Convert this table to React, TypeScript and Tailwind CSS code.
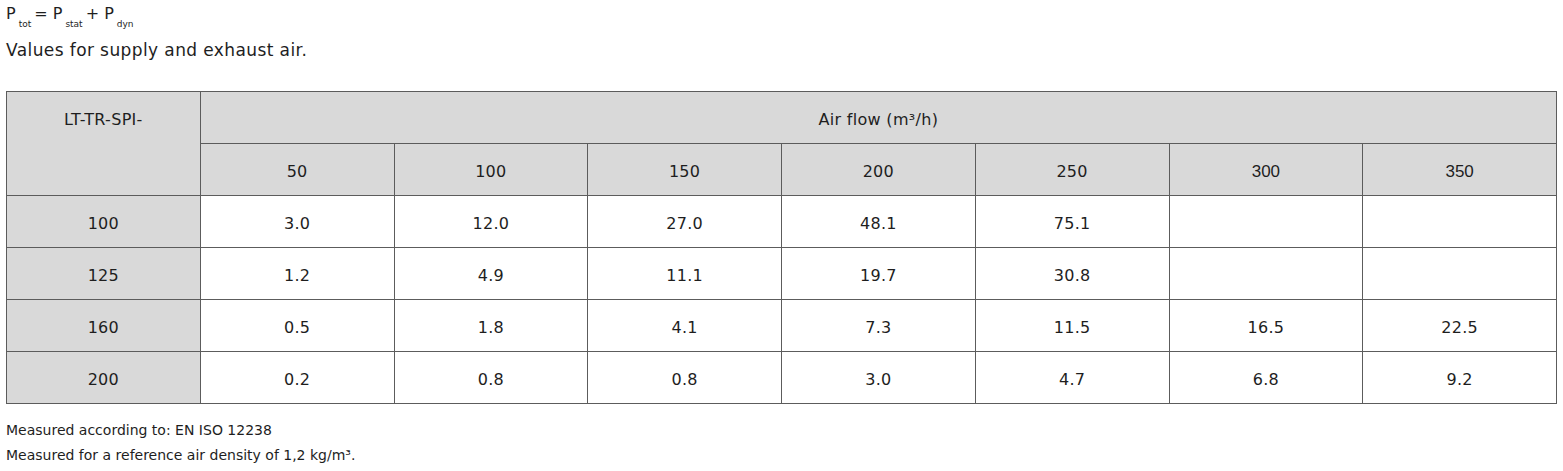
import React from "react";

const headers = ["50", "100", "150", "200", "250", "300", "350"];
const rows: { id: string; vals: string[] }[] = [
  { id: "100", vals: ["3.0", "12.0", "27.0", "48.1", "75.1", "", ""] },
  { id: "125", vals: ["1.2", "4.9", "11.1", "19.7", "30.8", "", ""] },
  { id: "160", vals: ["0.5", "1.8", "4.1", "7.3", "11.5", "16.5", "22.5"] },
  { id: "200", vals: ["0.2", "0.8", "0.8", "3.0", "4.7", "6.8", "9.2"] },
];

const cell = "border border-[#5c5c5c] text-center pt-[4px]";

export default function App() {
  return (
    <div className="w-[1563px] h-[471px] bg-white text-[#1e1e1e] font-['DejaVu_Sans',sans-serif]">
      <div className="pl-[6px] pt-[3px] text-[16px] leading-[22px]">
        <div className="flex items-start">
          <span>P</span>
          <span className="text-[9px] mt-[10px] mx-[3px]">tot</span>
          <span> = P</span>
          <span className="text-[9px] mt-[10px] mx-[3px]">stat</span>
          <span> + P</span>
          <span className="text-[9px] mt-[10px] mx-[3px]">dyn</span>
        </div>
        <div className="mt-[4px] text-[17px] tracking-[0.4px]">Values for supply and exhaust air.</div>
      </div>
      <div className="pl-[6px] pt-[30px]">
        <table className="w-[1551px] table-fixed border-collapse border border-[#222] text-[16px] tracking-[0.3px]">
          <tbody>
            <tr className="h-[52px] bg-[#d9d9d9]">
              <td rowSpan={2} className="border border-[#5c5c5c] text-center align-top pt-[16px]">
                LT-TR-SPI-
              </td>
              <td colSpan={7} className={cell}>
                Air flow (m³/h)
              </td>
            </tr>
            <tr className="h-[52px] bg-[#d9d9d9]">
              {headers.map((h, i) => (
                <td
                  key={h}
                  className={
                    i >= 5
                      ? "border border-[#5c5c5c] text-center pt-[4px] font-['Liberation_Sans',Arial,sans-serif] text-[17px] tracking-normal"
                      : cell
                  }
                >
                  {h}
                </td>
              ))}
            </tr>
            {rows.map((r) => (
              <tr key={r.id} className="h-[52px]">
                <td className={cell + " bg-[#d9d9d9]"}>{r.id}</td>
                {r.vals.map((v, i) => (
                  <td key={i} className={cell}>
                    {v}
                  </td>
                ))}
              </tr>
            ))}
          </tbody>
        </table>
      </div>
      <div className="pl-[6px] pt-[14px] text-[14px] leading-[25px]">
        <div>Measured according to: EN ISO 12238</div>
        <div>Measured for a reference air density of 1,2 kg/m³.</div>
      </div>
    </div>
  );
}
